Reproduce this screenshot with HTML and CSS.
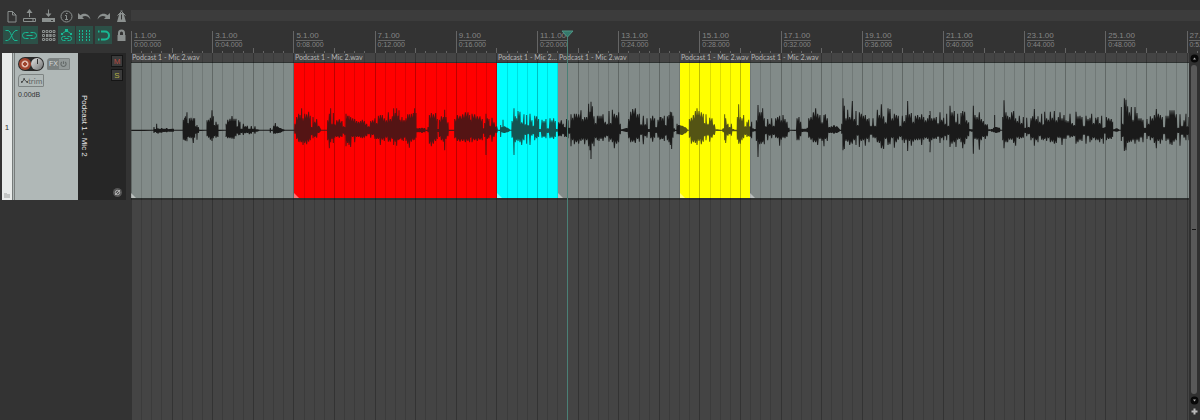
FILE: index.html
```
<!doctype html>
<html lang="en">
  <head>
    <meta charset="UTF-8" />
    <meta name="viewport" content="width=device-width, initial-scale=1.0" />
    <title>Podcast 1 - Mic 2</title>
    <link rel="stylesheet" href="styles.css">
  </head>
  <body>
    <aside class="sidebar">
      <div class="toolbar">
        <button class="tool" aria-label="New project">
          <svg viewBox="0 0 17 17"><path d="M5 3.500h4.500L13 7v7H5zM9.500 3.500V7H13" /></svg>
        </button>
        <button class="tool" aria-label="Open project">
          <svg viewBox="0 0 17 17"><path d="M2.500 10.500h12v3h-12zM8.500 9v-6" /><path class="fill" d="M8.500 1 11.500 5h-6zM11 11.500h2v1h-2z" /></svg>
        </button>
        <button class="tool" aria-label="Save project">
          <svg viewBox="0 0 17 17"><path d="M8.500 1.500v6" /><path class="fill" d="M5.500 5.500h6L8.500 9zM2 10h13v4H2z" /><path class="cut" d="M11 12.500h2" /></svg>
        </button>
        <button class="tool" aria-label="Project settings">
          <svg viewBox="0 0 17 17"><circle cx="8.500" cy="8.500" r="5.500" /><path d="M7 7.500h1.500v4M7 11.500h3M8 5.500h1.500" /></svg>
        </button>
        <button class="tool" aria-label="Undo">
          <svg viewBox="0 0 17 17"><path class="fill" d="M2 5v6h6L6.200 9C9 7.300 12 8 14.500 11.500 13.500 6 8.500 4 4.500 7.200z" /></svg>
        </button>
        <button class="tool" aria-label="Redo">
          <svg viewBox="0 0 17 17"><path class="fill" d="M15 5v6H9L10.800 9C8 7.300 5 8 2.500 11.500 3.500 6 8.500 4 12.500 7.200z" /></svg>
        </button>
        <button class="tool" aria-label="Metronome">
          <svg viewBox="0 0 17 17"><path class="fill" d="M6.500 5h4l2.500 9H4zM7.500 2.500h2v1h-2z" /><path d="M4.500 7.500 8.500 3.500l4 4" /><path class="cut" d="M8.500 6.500v5" /></svg>
        </button>
        <button class="tool active" aria-label="Auto crossfade">
          <svg viewBox="0 0 17 17"><path d="M2.500 3.500H5C8 3.500 9 13.500 12 13.500h2.500M14.500 3.500H13C10 3.500 7.500 13.500 4.500 13.500h-2" /></svg>
        </button>
        <button class="tool active" aria-label="Item grouping">
          <svg viewBox="0 0 17 17"><path d="M7.500 5.500h-3a3 3 0 0 0 0 6h3M9.500 5.500h3a3 3 0 0 1 0 6h-3M5.500 8.500h6" /></svg>
        </button>
        <button class="tool" aria-label="Ripple editing">
          <svg viewBox="0 0 17 17"><path d="M2.500 3.500h2v2h-2zM6 3.500h2v2H6zM9.500 3.500h2v2h-2zM13 3.500h2v2h-2zM2.500 7.500h2v2h-2zM13 7.500h2v2h-2zM2.500 11.500h2v2h-2zM6 11.500h2v2H6zM9.500 11.500h2v2h-2zM13 11.500h2v2h-2z" /><path class="fill" d="M6 7h2.500v3H6zM9.200 7h2.500v3H9.200z" /></svg>
        </button>
        <button class="tool active" aria-label="Envelope points move with items">
          <svg viewBox="0 0 17 17"><path d="M4.500 6.500l4-3 4 3M7.500 9.500h-2a2 2 0 0 0 0 4h2M9.500 9.500h2a2 2 0 0 1 0 4h-2M6.500 11.500h4" /><path class="fill" d="M7 2h3v3H7zM3 6h2v2H3zM12 6h2v2h-2z" /></svg>
        </button>
        <button class="tool active" aria-label="Grid lines">
          <svg viewBox="0 0 17 17"><path class="dash" d="M3.500 3v12M6.500 3v12M10.500 3v12M13.500 3v12" /></svg>
        </button>
        <button class="tool active" aria-label="Snapping">
          <svg viewBox="0 0 17 17"><path class="thick" d="M6 4.500h4a4 4 0 0 1 0 8H6" /><path class="thick" d="M3 4.500h1.500M3 12.500h1.500" /></svg>
        </button>
        <button class="tool" aria-label="Lock">
          <svg viewBox="0 0 17 17"><path class="fill" d="M4.500 8h8v6h-8z" /><path class="thick" d="M6 8V6a2.500 2.500 0 0 1 5 0v2" /></svg>
        </button>
      </div>

      <section class="track">
        <div class="track-number">
          <span>1</span>
          <svg class="folder" viewBox="0 0 6 6"><path d="M0 1h3v1h3v4H0z" /></svg>
        </div>
        <div class="track-controls">
          <div class="control-row">
            <div class="arm-group">
              <button class="record" aria-label="Record arm"></button>
              <button class="knob" aria-label="Volume"></button>
            </div>
            <div class="fx-group">
              <button class="fx">FX</button>
              <button class="power" aria-label="Bypass effects">
                <svg viewBox="0 0 8 8"><path d="M2.500 2.200a2.300 2.300 0 1 0 3 0M4 1.500v2.500" /></svg>
              </button>
            </div>
          </div>
          <button class="trim">
            <svg viewBox="0 0 9 8"><path d="M1.500 6l2.500-3.500L7.500 6" /><path class="fill" d="M0 5h2v2H0zM3 1h2v2H3zM7 5h2v2H7z" /></svg>
            trim
          </button>
          <output class="volume">0.00dB</output>
        </div>
        <div class="track-name">
          <h1>Podcast 1 - Mic 2</h1>
          <div class="track-buttons">
            <button class="mute">M</button>
            <button class="solo">S</button>
            <button class="phase" aria-label="Invert phase">
              <svg viewBox="0 0 9 9"><circle cx="4.500" cy="4.500" r="2.200" /><path d="M2 7l5-5" /></svg>
            </button>
          </div>
        </div>
      </section>
    </aside>

    <main class="arrange">
      <div class="region-bar"></div>
      <div class="timeline">
        <div class="ruler" id="ruler"></div>
        <div class="tracks-view">
          <div class="lanes">
            <div class="lane" id="lane"></div>
            <svg class="grid" id="grid"></svg>
          </div>
          <div class="scrollbar">
            <button class="scroll-button" aria-label="Scroll up">
              <svg viewBox="0 0 9 9"><circle cx="4.500" cy="4.500" r="4" /><path d="M3 5.500h3L4.500 3.500z" /></svg>
            </button>
            <div class="scroll-thumb"></div>
            <button class="scroll-button" aria-label="Scroll down">
              <svg viewBox="0 0 9 9"><circle cx="4.500" cy="4.500" r="4" /><path d="M3 3.500h3L4.500 5.500z" /></svg>
            </button>
            <button class="scroll-button" aria-label="Zoom in">
              <svg viewBox="0 0 9 9"><path d="M3.500 1.500h2v2h2v2h-2v2h-2v-2h-2v-2h2z" /></svg>
            </button>
          </div>
        </div>
        <svg class="playhead" id="playhead" aria-hidden="true">
          <path class="playhead-line" d="M6.500 6V4000" />
          <path class="playhead-head" d="M1 1h11L6.500 7z" />
        </svg>
      </div>
    </main>

    <script src="timeline.js"></script>
  </body>
</html>
```
FILE: styles.css
```
* {
  margin: 0;
  padding: 0;
  box-sizing: border-box;
}

body {
  font-family: 'Liberation Sans', Arial, sans-serif;
  font-size: 8px;
  background: #333333;
  color: #8a8a8a;
  height: 100vh;
  overflow: hidden;
  display: grid;
  grid-template-columns: 131px minmax(0, 1fr);
}

button {
  border: none;
  background: none;
  color: inherit;
  font: inherit;
  cursor: pointer;
}

svg {
  display: block;
  fill: none;
  stroke: currentColor;
}

.fill {
  fill: currentColor;
  stroke: none;
}

/* Toolbar */
.sidebar {
  padding-top: 7px;
}

.toolbar {
  display: grid;
  grid-template-columns: repeat(7, 1fr);
  justify-items: center;
  row-gap: 1px;
  padding-left: 2px;
}

.tool {
  width: 17px;
  height: 18px;
  color: #8b908f;
}

.tool svg {
  width: 17px;
  height: 17px;
}

.tool.active {
  background: #2c5047;
  color: #18b894;
}

.cut {
  stroke: #333333;
}

.dash {
  stroke-dasharray: 2 1;
}

.thick {
  stroke-width: 2;
}

/* Track panel */
.track {
  display: flex;
  height: 147px;
  margin: 9px 5px 0 2px;
  background: #262626;
}

.track-number {
  width: 10px;
  background: #e8ebea;
  color: #333333;
  display: flex;
  flex-direction: column;
  justify-content: flex-end;
  align-items: center;
  gap: 60px;
  padding-bottom: 2px;
}

.folder {
  width: 6px;
  height: 6px;
  fill: #c2c5c4;
  stroke: none;
}

.track-controls {
  width: 66px;
  padding: 4px 0 0 3px;
  background: #b0b8b7;
  border-left: 3px double #777c7b;
  color: #333333;
  display: flex;
  flex-direction: column;
  align-items: flex-start;
}

.control-row {
  display: flex;
  gap: 3px;
}

.arm-group {
  display: flex;
  width: 26px;
  height: 14px;
  padding: 1px;
  border-radius: 7px;
  background: #292929;
}

.record,
.knob {
  width: 12px;
  height: 12px;
  border-radius: 50%;
}

.record {
  background: radial-gradient(circle, #a0442f 0 2px, #e0b8ac 2px 3px, #a0442f 4px);
}

.knob {
  background:
    linear-gradient(#333333, #333333) 50% 1px / 1px 5px no-repeat,
    linear-gradient(135deg, #e4e4e4, #6f7171);
}

.fx-group {
  display: flex;
  align-self: center;
  height: 12px;
  border: 1px solid #7d8382;
  border-radius: 3px 1px 1px 1px;
  background: #929998;
}

.fx {
  width: 11px;
  font-size: 7px;
  line-height: 10px;
  color: #d4d9d8;
  background: #7b8180;
}

.power {
  width: 10px;
  color: #656b6a;
}

.power svg {
  width: 9px;
  height: 10px;
}

.trim {
  display: flex;
  align-items: center;
  justify-content: space-between;
  width: 26px;
  height: 13px;
  margin-top: 3px;
  padding: 0 2px;
  border: 1px solid #7d8382;
  border-radius: 4px 1px 1px 1px;
  font-family: Lato, sans-serif;
  color: #626867;
}

.trim svg {
  width: 7px;
  height: 7px;
  flex-shrink: 0;
  color: #333333;
}

.volume {
  margin-top: 3px;
  font-size: 7px;
  line-height: 9px;
}

.track-name {
  flex: 1;
  display: flex;
  justify-content: space-between;
  padding: 2px 3px 3px 1px;
}

.track-name h1 {
  writing-mode: vertical-rl;
  text-align: center;
  font-size: 8px;
  font-weight: 400;
  line-height: 11px;
  color: #e6e6e6;
}

.track-buttons {
  display: flex;
  flex-direction: column;
  align-items: center;
  gap: 2px;
}

.mute,
.solo {
  width: 12px;
  height: 12px;
  border: 1px solid #151515;
  background: #3b3b3b;
}

.mute {
  color: #b44b42;
}

.solo {
  color: #b5b145;
}

.phase {
  margin-top: auto;
  width: 9px;
  height: 9px;
  border-radius: 50%;
  background: #555555;
  color: #b0b0b0;
}

/* Arrange view */
.arrange {
  display: grid;
  grid-template-columns: minmax(0, 1fr);
  grid-template-rows: 11px minmax(0, 1fr);
  row-gap: 9px;
  padding-top: 10px;
}

.region-bar {
  background: #3c3c3c;
}

.timeline {
  position: relative;
  display: flex;
  flex-direction: column;
  overflow: hidden;
}

.ruler {
  position: relative;
  display: flex;
  height: 23px;
  flex-shrink: 0;
  color: #858585;
}

.ruler-ticks {
  position: absolute;
  inset: 0;
  width: 100%;
  height: 100%;
  stroke: #656565;
}

.ruler-mark {
  flex-shrink: 0;
  padding: 1px 0 0 3px;
  white-space: nowrap;
}

.ruler-mark span {
  display: block;
  width: 27px;
  line-height: 9px;
}

.ruler-mark .bar {
  border-bottom: 1px solid #656565;
}

.ruler-mark .time {
  font-size: 7px;
  line-height: 8px;
}

.tracks-view {
  display: flex;
  flex: 1;
}

.lanes {
  position: relative;
  flex: 1;
  min-width: 0;
  background: #444444;
}

.lane {
  display: flex;
  height: 147px;
  border-bottom: 1px solid #303030;
}

.grid {
  position: absolute;
  inset: 0;
  width: 100%;
  height: 100%;
  stroke: #000000;
}

.grid .beats {
  stroke-opacity: 0.13;
}

.grid .bars {
  stroke-opacity: 0.25;
}

/* Media items */
.item {
  flex-shrink: 0;
  display: grid;
  grid-template-rows: 9px 1fr;
  overflow: hidden;
  color: #1a1a1a;
}

.item:last-child {
  flex: 1;
}

.item-name {
  position: relative;
  z-index: 1;
  overflow: hidden;
  text-overflow: ellipsis;
  white-space: nowrap;
  padding-left: 1px;
  font-family: Lato, sans-serif;
  font-size: 7px;
  font-weight: 400;
  line-height: 9px;
  color: #b4b4b4;
}

.item-body {
  background: #828b89;
  border: solid #2f3332;
  border-width: 1px 0;
  overflow: hidden;
}

.item-body svg {
  position: relative;
  z-index: 1;
  width: 100%;
  height: 100%;
}

.wave {
  fill: currentColor;
  stroke: none;
}

.fade {
  fill: #ffffff;
  fill-opacity: 0.45;
  stroke: none;
}

.item.red {
  color: #541414;
}

.item.red .item-body {
  background: #ff0000;
}

.item.cyan {
  color: #145452;
}

.item.cyan .item-body {
  background: #00ffff;
}

.item.yellow {
  color: #545414;
}

.item.yellow .item-body {
  background: #ffff00;
}

.playhead {
  position: absolute;
  z-index: 2;
  top: 0;
  width: 13px;
  height: 100%;
}

.playhead-line {
  stroke: #4a8076;
}

.playhead-head {
  fill: #35786b;
  stroke: #4f9585;
}

/* Scrollbar */
.scrollbar {
  width: 11px;
  display: flex;
  flex-direction: column;
  align-items: center;
  gap: 2px;
  padding: 1px 1px 4px 0;
  background: #303030;
}

.scroll-button {
  width: 9px;
  height: 9px;
  color: #b8b8b8;
}

.scroll-button svg {
  fill: currentColor;
  stroke: none;
}

.scroll-button circle {
  fill: #080808;
}

.scroll-thumb {
  flex: 1;
  width: 6px;
  border-radius: 3px;
  background: linear-gradient(#151515, #151515) center / 4px 1px no-repeat #595959;
}
```
FILE: timeline.js
```
const SVG_NS = 'http://www.w3.org/2000/svg';
const BEAT = 10.15;
const BEATS_PER_MARK = 8;
const PEAK_SCALE = 3; // peak units per pixel
const ITEM_HEIGHT = 135;

const items = [
  { start: 0, end: 163 },
  { start: 163, end: 366, color: 'red' },
  { start: 366, end: 427, color: 'cyan' },
  { start: 427, end: 549 },
  { start: 549, end: 619, color: 'yellow' },
  { start: 619, end: 4000 },
];

// Peaks as "position,up,down", in blocks with their own start
const peakBlocks = [
  {
    at: -3,
    peaks: `5,2,2 40,2,2 68,1,1 72,10,8 76,4,5 80,20,8 84,6,10 90,5,7 95,7,7 102,5,5 110,7,6 118,4,4 130,5,4 134,1,1
      156,1,1 160,32,28 164,38,30 166,42,31 171,54,33 174,22,20 178,36,22 183,38,24 190,36,38 194,36,22 197,12,10
      201,16,28 205,10,8 211,1,2 228,1,1 231,30,18 236,32,22 241,38,28 246,60,32 250,42,24 253,16,18 258,26,22
      264,18,20 267,2,2 286,1,1 288,20,20 293,32,24 300,35,24 306,43,25 312,35,26 318,35,18 322,12,10 326,30,15
      330,26,14 334,5,8 340,20,14 346,12,9 352,14,8 358,5,12 364,13,10 369,5,5 375,12,10 380,3,4 390,1,1 417,1,1
      421,7,7 425,1,2 431,14,10 436,22,10 441,12,9 450,7,7 460,3,3 468,1,1 490,1,1 495,20,10 500,40,26 506,50,34
      510,46,36 515,66,36 519,36,44 524,50,38 530,48,42 536,56,34 541,44,30 545,10,15 549,40,24 554,26,20 560,34,22
      566,14,8 575,1,1 589,1,1 593,30,30 598,50,54 602,66,36 606,20,26 610,52,38 614,18,22 620,30,20 628,33,22
      636,28,20 641,12,10 644,10,15 648,50,48 653,44,38 657,44,44 662,40,50 668,36,20 674,34,36 680,28,20 686,26,20
      692,28,22 697,32,24 703,28,22 710,20,18 716,12,12 722,28,22 728,30,14 735,36,26 740,22,26 745,44,26 751,46,44
      757,46,28 763,36,32 769,30,22 775,54,34 781,34,34 787,42,26 791,66,44 796,52,34 800,66,46 804,44,30 807,60,28`,
  },
  {
    at: 807,
    peaks: `0,32,26 6,40,30 10,30,32 14,30,22 18,36,32 23,48,40 28,48,52 34,50,34 40,52,30 44,66,28 48,52,22 51,6,6
      58,7,6 66,8,8 74,7,6 80,1,2 84,10,6 88,46,40 94,52,48 100,48,40 107,52,32 112,34,26 114,4,5 118,32,20 124,42,30
      130,40,34 134,62,60 138,40,26 144,24,18 149,2,2 161,1,2 164,34,24 172,46,32 180,44,34 188,48,32 196,54,36
      204,54,32 209,46,36 212,32,22 216,50,36 224,48,30 232,42,32 240,42,28 247,34,30 251,6,10 254,22,20 258,50,74
      262,36,26 267,34,24 270,14,15 276,38,34 282,24,20 290,12,8 298,1,2 302,16,20 306,10,6 309,32,8 313,12,8 322,8,6
      332,1,1 336,28,22 342,66,74 346,42,36 350,36,30 354,58,32 360,56,36 365,24,44 372,48,30 376,18,14 380,46,40
      384,16,12 390,50,44 396,30,16 400,14,12 404,44,30 410,42,24 416,34,20 419,4,5 426,32,22 432,28,20 438,34,24
      443,6,8 450,36,24 456,30,22 461,36,26 466,28,20 470,4,4 476,24,18 484,30,18 490,20,12 494,10,20 500,34,20
      504,30,24 508,8,10 513,48,48 518,38,30 523,50,42 529,50,36 536,48,40 543,60,32 548,34,28 554,40,42 560,40,30
      566,80,48 570,56,60 573,86,86 577,72,40 582,42,48 587,22,24 592,44,30 597,44,32 603,44,26 609,48,32 616,26,22
      622,20,18 627,58,34 632,22,28 637,62,36 643,50,54 650,46,40 656,54,36 661,20,12 665,3,2 680,7,5 686,34,24
      692,56,36 698,64,34 706,66,38 713,48,26 718,50,34 723,18,14 730,44,42 736,18,18 741,36,22 747,4,5 752,36,24
      758,44,34 764,36,22 768,10,8 774,32,22 780,40,28`,
  },
  {
    at: 1587,
    peaks: `3,40,26 8,36,26 13,44,32 17,16,16 22,42,30 27,46,36 31,56,44 35,54,56 39,44,22 43,6,4 47,2,2 51,20,12
      56,16,12 66,14,14 76,9,9 85,1,1 88,34,22 94,38,40 100,46,36 106,58,38 111,66,44 117,58,32 124,54,42 130,50,34
      134,22,18 138,48,30 144,20,16 149,38,34 156,36,22 163,18,14 171,3,2 182,2,2 190,6,6 194,48,30 197,36,38
      204,20,16 209,10,12 214,20,16 220,4,3 228,2,3 232,40,28 236,78,40 241,40,40 246,36,30 251,46,24 256,12,14
      261,26,20 266,32,18 270,12,20 275,26,24 279,6,4 285,4,3 289,30,32 294,76,80 299,54,42 304,54,40 308,66,36
      313,36,42 317,12,12 323,34,30 329,20,16 335,36,24 341,14,14 347,36,22 353,40,24 359,44,46 364,30,28 369,46,22
      375,34,24 381,26,20 387,8,6 391,1,1 405,1,2 411,36,30 417,40,30 422,26,18 428,5,5 435,5,4 442,8,6 446,36,22
      453,40,28 460,54,36 467,66,36 473,50,44 480,46,26 486,24,32 492,46,48 496,48,26 502,36,32 508,10,8 514,12,8
      522,16,10 530,12,8 542,2,2 545,20,10 549,96,60 553,74,56 558,36,32 563,62,34 569,40,44 577,88,40 583,34,30
      588,58,44 593,16,16 598,54,50 604,50,32 610,44,30 616,46,46 622,34,26 627,36,36 633,14,14 639,36,22 645,14,24
      652,62,36 658,46,38 664,78,54 671,42,56 677,24,26 684,66,44 690,64,42 697,36,24 703,50,52 709,46,36 715,44,28
      721,14,20 727,44,30 733,28,38 738,46,30 743,88,62 748,48,32 754,52,46 760,26,34 766,44,30 773,46,30 779,40,28
      785,48,44 791,40,28 797,30,24 803,36,26 808,46,34`,
  },
  {
    at: 2397,
    peaks: `0,58,66 5,36,30 12,38,26 19,40,26 24,22,20 30,54,38 35,32,24 41,38,30 46,20,18 50,50,30 55,14,14 60,74,50
      66,54,40 73,58,36 78,26,50 83,50,28 88,20,26 93,52,36 98,58,54 104,56,42 110,30,26 116,24,18 120,4,3 125,3,4
      130,74,70 135,46,26 141,40,28 148,54,58 154,34,30 160,28,20 166,18,26 172,18,18 178,3,2 185,4,4 191,8,6
      194,46,6 197,10,8 208,8,6 215,1,1 218,40,30 222,90,54 228,54,36 233,44,36 239,40,28 245,54,28 251,58,38
      257,36,46 262,28,22 268,44,26 275,22,24 280,40,22 286,8,8 290,38,18 296,10,12 303,36,30 308,42,24 313,64,46
      319,34,30 324,42,36 329,26,18 335,50,28 340,18,30 344,56,26 350,36,32 355,32,24 361,56,36 367,38,34 373,58,40
      379,30,38 385,40,22 390,54,24 396,36,44 402,46,26 408,30,26 414,28,16 420,50,22 427,22,20 433,16,18 438,56,40
      444,42,36 450,44,30 456,40,32 462,14,14 468,44,40 474,34,18 480,38,36 485,50,30 491,22,24 497,38,30 504,40,30
      509,22,36 515,44,26 520,8,40 525,10,10 529,40,30 536,36,26 544,34,26 548,26,20 551,3,3 560,6,4 570,1,1
      574,70,32 578,20,20 583,96,62 588,92,60 593,72,38 598,54,36 604,70,34 609,32,30 615,70,40 621,52,30 627,36,34
      633,36,22 639,32,36 645,8,8 651,34,26 656,20,18 661,42,30 667,36,24 673,46,38 679,64,54 685,50,32 691,46,40
      697,40,30 702,10,12 708,44,32 714,44,28 720,60,42 726,60,44 732,60,34 739,48,30 745,8,8 750,48,46 756,14,14
      762,30,22 768,50,30 772,12,14 777,40,30`,
  },
];

function svgEl(name, attrs) {
  const el = document.createElementNS(SVG_NS, name);
  for (const key in attrs) {
    el.setAttribute(key, attrs[key]);
  }
  return el;
}

// Closed outline of the whole recording: each peak is a short plateau with a notch after it
function buildWavePath() {
  const peaks = peakBlocks.flatMap((block) =>
    block.peaks.split(/\s+/).map((p) => {
      const [x, up, down] = p.split(',').map(Number);
      return [x + block.at, up, down];
    })
  );
  const points = [];
  peaks.forEach((peak, i) => {
    const [x, up, down] = peak;
    points.push([x - 1.4, up, down], [x + 1.4, up, down]);
    const next = peaks[i + 1];
    if (next && next[0] - x > 3 && next[0] - x < 9) {
      points.push([
        (x + next[0]) / 2,
        Math.min(up, next[1]) * 0.75,
        Math.min(down, next[2]) * 0.8,
      ]);
    }
  });
  const mid = 202;
  const top = points.map(([x, up]) => `${x} ${mid - Math.max(up, 1.5)}`);
  const bottom = points.map(([x, , down]) => `${x} ${mid + Math.max(down, 1.5)}`);
  return `M${top.join('L')}L${bottom.reverse().join('L')}Z`;
}

function verticals(from, to, step, skip, y1, y2) {
  let d = '';
  for (let i = from; i < to; i += step) {
    if (skip && i % skip === 0) continue;
    d += `M${Math.round(i * BEAT) + 0.5} ${y1}V${y2}`;
  }
  return d;
}

function drawRuler() {
  const ruler = document.getElementById('ruler');
  const markWidth = BEAT * BEATS_PER_MARK;
  const markCount = Math.ceil(ruler.clientWidth / markWidth);
  const ticks = svgEl('svg', { class: 'ruler-ticks' });
  ticks.append(
    svgEl('path', { d: verticals(0, 400, 1, 4, 21, 23) }),
    svgEl('path', { d: verticals(4, 400, 8, 0, 18, 23) }),
    svgEl('path', { d: verticals(0, 400, 8, 0, 1, 23) })
  );
  ruler.append(ticks);

  for (let i = 0; i < markCount; i++) {
    const seconds = i * 4;
    const time = `${Math.floor(seconds / 60)}:${String(seconds % 60).padStart(2, '0')}.000`;
    const mark = document.createElement('div');
    mark.className = 'ruler-mark';
    mark.style.width = `${markWidth}px`;
    mark.innerHTML = `<span class="bar">${i * 2 + 1}.1.00</span><span class="time">${time}</span>`;
    ruler.append(mark);
  }
}

function drawGrid() {
  document.getElementById('grid').append(
    svgEl('path', { class: 'beats', d: verticals(0, 400, 1, 4, 0, 4000) }),
    svgEl('path', { class: 'bars', d: verticals(0, 400, 4, 0, 0, 4000) })
  );
}

function drawItems() {
  const lane = document.getElementById('lane');
  const wave = buildWavePath();
  items.forEach((item) => {
    const el = document.createElement('article');
    el.className = `item ${item.color || ''}`;
    el.style.width = `${item.end - item.start}px`;
    el.innerHTML = '<h2 class="item-name">Podcast 1 - Mic 2.wav</h2><div class="item-body"></div>';

    const svg = svgEl('svg', {});
    svg.append(
      svgEl('path', {
        class: 'wave',
        d: wave,
        transform: `translate(${-item.start}) scale(${1 / PEAK_SCALE})`,
      }),
      svgEl('path', { class: 'fade', d: `M0 ${ITEM_HEIGHT - 5}L5 ${ITEM_HEIGHT}H0Z` })
    );
    el.querySelector('.item-body').append(svg);
    lane.append(el);
  });
}

drawRuler();
drawGrid();
drawItems();
document.getElementById('playhead').style.left = `${Math.round(43 * BEAT) - 6}px`;
```
